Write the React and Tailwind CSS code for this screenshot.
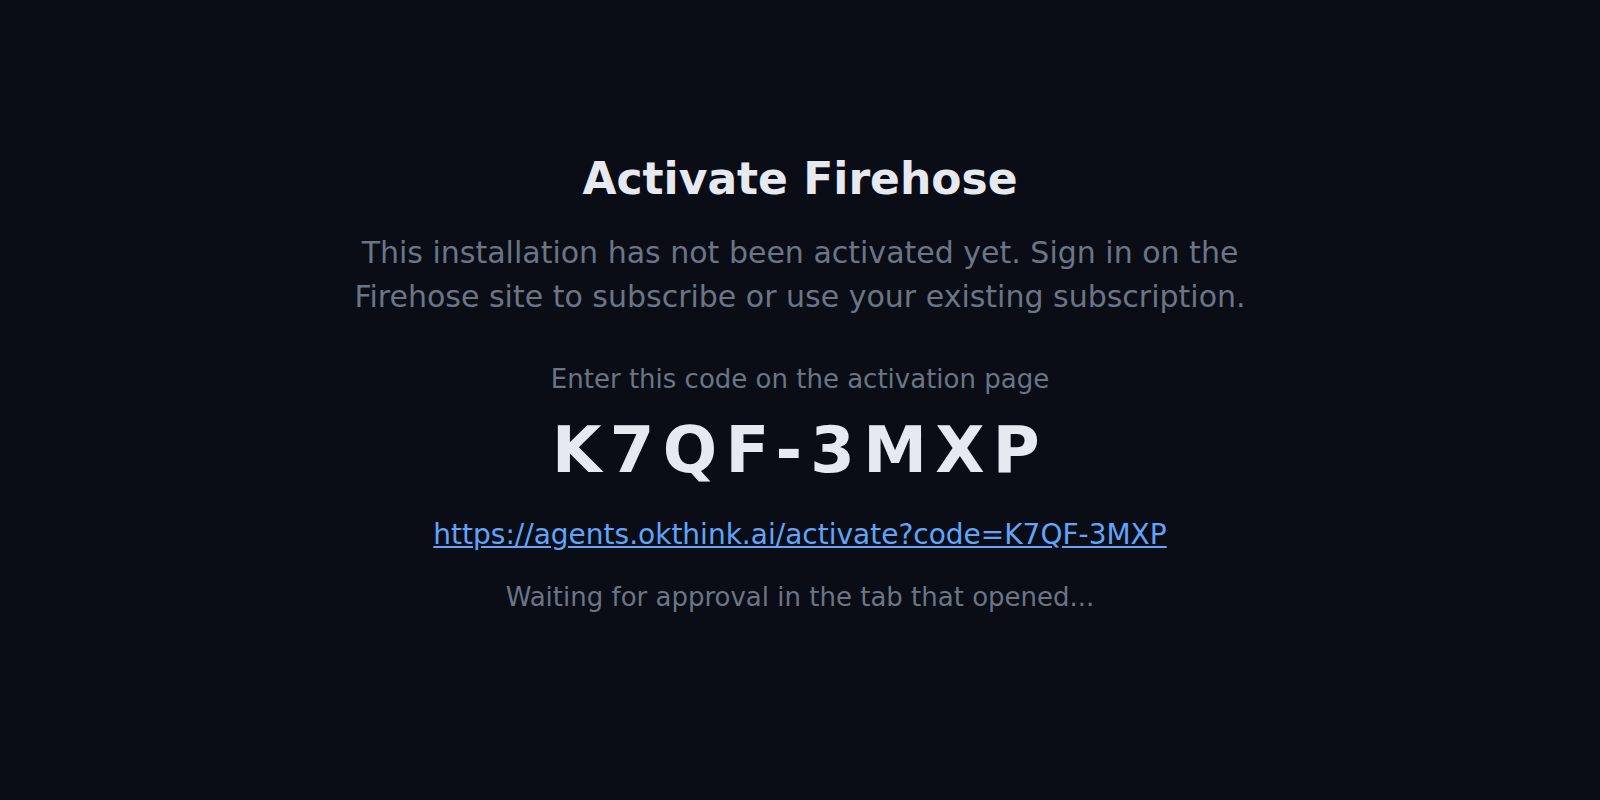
export default function App() {
    const code = 'K7QF-3MXP';
    const url = `https://agents.okthink.ai/activate?code=${code}`;

    return (
        <div className="min-h-screen bg-[#0a0d16] flex items-center justify-center pb-[30px] font-['DejaVu_Sans',sans-serif]">
            <div className="flex flex-col items-center text-center">
                <h1 className="text-[44px] font-bold leading-[1.2] text-[#e6e9f0]">Activate Firehose</h1>

                <p className="mt-[25px] max-w-[940px] text-[30px] leading-[44px] text-[#6b7585]">
                    This installation has not been activated yet. Sign in on the Firehose site to subscribe or use your existing subscription.
                </p>

                {/* Code */}
                <p className="mt-[41px] text-[26px] leading-[39px] text-[#6b7585]">Enter this code on the activation page</p>
                <div className="mt-[13px] text-[64px] font-bold leading-[1.2] tracking-[0.13em] text-[#e6e9f0]">
                    {code}
                </div>

                <a href={url} className="mt-[27px] text-[28px] leading-[39px] text-[#60a5fa] underline">
                    {url}
                </a>

                <p className="mt-6 text-[26px] leading-[39px] text-[#6b7585]">Waiting for approval in the tab that opened...</p>
            </div>
        </div>
    );
}
